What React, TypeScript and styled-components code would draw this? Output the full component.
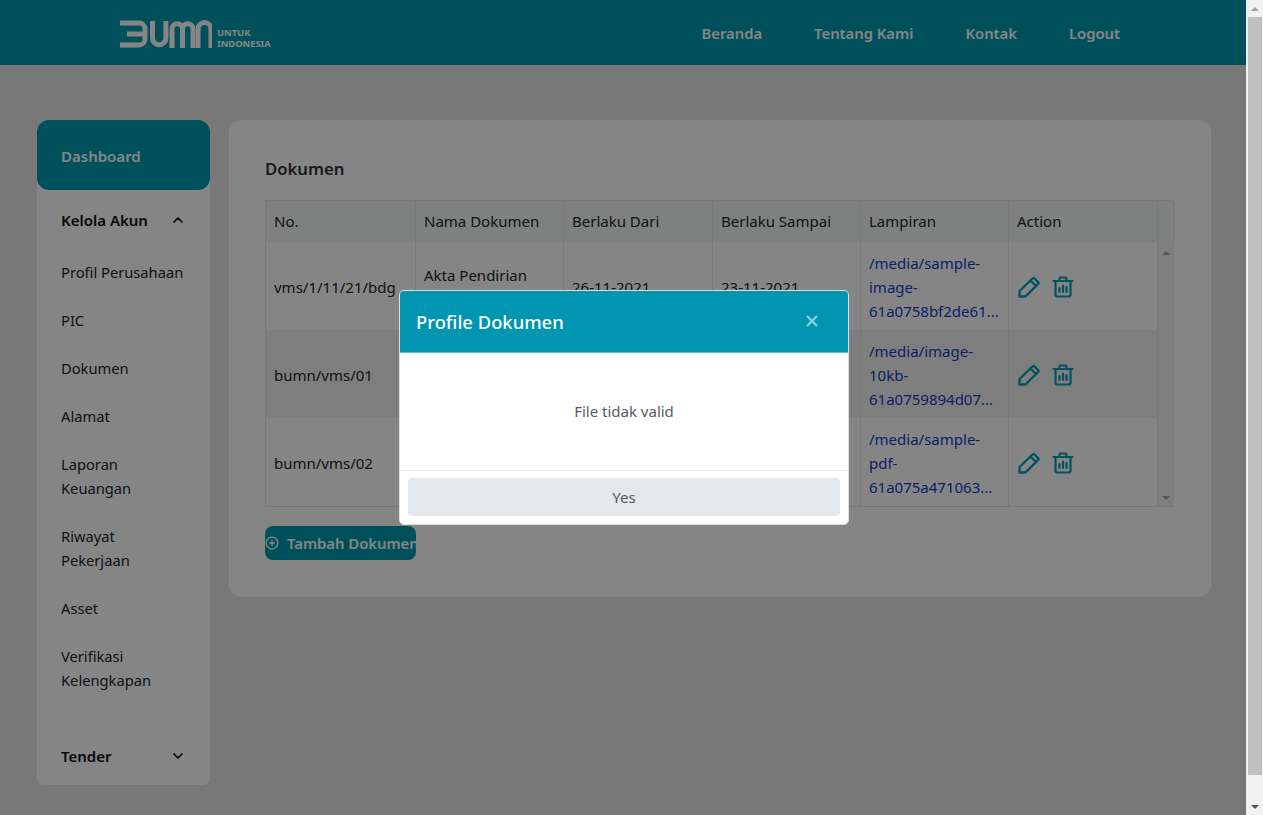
import styled, { createGlobalStyle } from "styled-components";
import { ChevronDown, ChevronUp, CirclePlus } from "lucide-react";

const GlobalStyle = createGlobalStyle`
  html, body {
    margin: 0;
    padding: 0;
    overflow: hidden;
  }
  * {
    box-sizing: border-box;
  }
  body {
    font-family: "Noto Sans", "Open Sans", sans-serif;
    font-size: 15px;
    line-height: 24px;
    color: #212529;
  }
`;

const Shell = styled.div`
  display: flex;
  width: 1263px;
  height: 815px;
  overflow: hidden;
`;

const Page = styled.div`
  position: relative;
  width: 1246px;
  height: 815px;
  background-color: #e6e6e6;
  overflow: hidden;
`;

const Navbar = styled.header`
  display: flex;
  align-items: center;
  height: 65px;
  padding-left: 120px;
  background-color: #009ab1;
`;

const Logo = styled.div`
  display: flex;
  align-items: flex-end;
  gap: 5px;
  height: 30px;
`;

const LogoText = styled.div`
  font-size: 9.4px;
  line-height: 11px;
  font-weight: 700;
  color: #ffffff;
  margin-bottom: -1px;
`;

const NavLinks = styled.nav`
  display: flex;
  margin-left: auto;
  margin-right: 126px;
  gap: 52px;
`;

const NavLink = styled.a`
  font-size: 14.8px;
  font-weight: 600;
  color: #ffffff;
`;

const Body = styled.div`
  display: flex;
  align-items: flex-start;
  gap: 19px;
  padding: 55px 35px 0 37px;
`;

const Sidebar = styled.aside`
  width: 173px;
  height: 665px;
  flex-shrink: 0;
  background-color: #ffffff;
  border-radius: 12px 12px 6px 6px;
`;

const DashboardItem = styled.div`
  display: flex;
  align-items: center;
  height: 70px;
  padding: 2px 0 0 24px;
  background-color: #009ab1;
  border-radius: 12px;
  font-weight: 600;
  color: #ffffff;
`;

const GroupTitle = styled.div<{ $gap?: number }>`
  display: flex;
  align-items: center;
  justify-content: space-between;
  height: 60px;
  padding: 0 24px;
  margin-top: ${props => props.$gap || 0}px;
  margin-bottom: -2px;
  font-weight: 600;
  color: #111111;
`;

const SubItem = styled.div`
  padding: 12px 24px;
  font-size: 14.7px;
  color: #212529;
`;

const Card = styled.main`
  flex: 1;
  height: 477px;
  padding: 36px;
  background-color: #ffffff;
  border-radius: 12px;
`;

const CardTitle = styled.h2`
  margin: 0 0 17px;
  height: 27px;
  font-size: 16.7px;
  line-height: 26px;
  font-weight: 600;
  color: #333333;
`;

const TableFrame = styled.div`
  width: 909px;
  border-style: solid;
  border-color: #e9e9e9;
  border-width: 1px 0 0 1px;
`;

const COLUMNS = "150px 148px 149px 148px 148px 149px";

const HeadRow = styled.div`
  display: grid;
  grid-template-columns: ${COLUMNS} 16px;
  background-color: #f2f8f6;
  border-bottom: 1px solid #eaf0ee;
`;

const HeadCell = styled.div`
  height: 40px;
  padding: 8px;
  border-right: 1px solid #e6ebe9;
`;

const BodyWrap = styled.div`
  display: flex;
  height: 265px;
  border-bottom: 1px solid #e3e3e3;
`;

const Rows = styled.div`
  width: 892px;
`;

const Row = styled.div<{ $striped?: boolean }>`
  display: grid;
  grid-template-columns: ${COLUMNS};
  height: 88px;
  background-color: ${props => (props.$striped ? "#f2f2f2" : "#ffffff")};
`;

const Cell = styled.div`
  display: flex;
  align-items: center;
  padding: 9px 8px 7px;
  border-right: 1px solid #e6e6e6;
`;

const FileLink = styled.a`
  color: #0f3ec4;
`;

const Actions = styled.div`
  display: flex;
  align-items: center;
  gap: 12px;
  margin-left: 1px;
  color: #00a0b6;
`;

const InnerScroll = styled.div`
  display: flex;
  flex-direction: column;
  align-items: center;
  justify-content: space-between;
  width: 16px;
  padding: 9px 0 6px;
  background-color: #f1f1f1;
`;

const Arrow = styled.span<{ $down?: boolean; $color: string }>`
  width: 0;
  height: 0;
  border-left: 4px solid transparent;
  border-right: 4px solid transparent;
  border-top: ${props => (props.$down ? `4px solid ${props.$color}` : "0")};
  border-bottom: ${props => (props.$down ? "0" : `4px solid ${props.$color}`)};
`;

const AddButton = styled.button`
  display: flex;
  align-items: center;
  gap: 8px;
  width: 151px;
  height: 34px;
  margin-top: 19px;
  padding: 0;
  border: 0;
  overflow: hidden;
  white-space: nowrap;
  background-color: #009ab1;
  border-radius: 8px;
  font-family: inherit;
  font-size: 14.8px;
  font-weight: 600;
  color: #ffffff;
  svg {
    flex-shrink: 0;
  }
`;

const Backdrop = styled.div`
  position: absolute;
  inset: 0;
  background-color: rgba(0, 0, 0, 0.48);
`;

const Modal = styled.div`
  position: absolute;
  left: 399px;
  top: 290px;
  width: 450px;
  height: 235px;
  background-color: #ffffff;
  border: 1px solid #dddddd;
  border-radius: 5px;
  overflow: hidden;
`;

const ModalHeader = styled.div`
  display: flex;
  align-items: center;
  justify-content: space-between;
  height: 62px;
  padding: 1px 30px 0 16px;
  background-color: #0095b0;
  border-bottom: 1px solid #5cc0d2;
`;

const ModalTitle = styled.h5`
  margin: 0;
  font-size: 18.4px;
  line-height: 30px;
  font-weight: 500;
  color: #ffffff;
`;

const CloseIcon = styled.svg`
  width: 12px;
  height: 12px;
  margin-top: -3px;
  opacity: 0.55;
`;

const ModalBody = styled.div`
  display: flex;
  align-items: center;
  justify-content: center;
  height: 116px;
  color: #555a60;
`;

const ModalFooter = styled.div`
  margin-top: 1px;
  padding: 7px 8px;
  border-top: 1px solid #eeeeee;
`;

const YesButton = styled.button`
  display: block;
  width: 100%;
  height: 38px;
  padding: 0;
  border: 0;
  background-color: #e4e7ec;
  border-radius: 4px;
  font-family: inherit;
  font-size: 15px;
  color: #555a60;
`;

const PageScroll = styled.div`
  display: flex;
  flex-direction: column;
  align-items: center;
  width: 17px;
  height: 815px;
  background-color: #f1f1f1;
`;

const ArrowSlot = styled.div`
  display: flex;
  align-items: center;
  justify-content: center;
  width: 100%;
  height: 17px;
`;

const Thumb = styled.div`
  width: 14px;
  height: 758px;
  margin-left: 1px;
  background-color: #c1c1c1;
`;

const Spacer = styled.div`
  flex: 1;
`;

const menuItems = ["Profil Perusahaan", "PIC", "Dokumen", "Alamat", "Laporan Keuangan", "Riwayat Pekerjaan", "Asset", "Verifikasi Kelengkapan"];

const documents = [
  { no: "vms/1/11/21/bdg", name: "Akta Pendirian Perusahaan", from: "26-11-2021", to: "23-11-2021", file: "/media/sample-image-61a0758bf2de61..." },
  { no: "bumn/vms/01", name: "NPWP", from: "26-11-2021", to: "30-11-2021", file: "/media/image-10kb-61a0759894d07..." },
  { no: "bumn/vms/02", name: "SIUP", from: "26-11-2021", to: "30-11-2021", file: "/media/sample-pdf-61a075a471063..." },
];

function BumnLogo() {
  return (
    <svg width="92" height="28" viewBox="0 0 92 28" fill="none" stroke="#ffffff" strokeWidth="5">
      <path d="M0 3H19a6 6 0 0 1 6 6V19a6 6 0 0 1-6 6H0M7 14H25" />
      <path d="M32.5 1V18a6.7 6.7 0 0 0 13.4 0V1" />
      <path d="M52 28V9a5.2 5.2 0 0 1 10.5 0V28M62.5 9a5.2 5.2 0 0 1 10.5 0V28" />
      <path d="M78 28V9a6.5 6.5 0 0 1 13 0V28" />
    </svg>
  );
}

function PencilIcon() {
  return (
    <svg width="22" height="22" viewBox="0 0 22 22" fill="none" stroke="currentColor" strokeWidth="2.4" strokeLinejoin="round" strokeLinecap="round">
      <path d="M1.5 20.5V15L14.5 2.5Q15.5 1.5 16.5 2.5L20 6Q21 7 20 8L7.5 20.5Z" />
      <path d="M12.5 4.5L18 10" />
    </svg>
  );
}

function TrashIcon() {
  return (
    <svg width="22" height="22" viewBox="0 0 22 22" fill="none" stroke="currentColor" strokeWidth="2.2" strokeLinejoin="round" strokeLinecap="round">
      <path d="M1.5 5H20.5" />
      <path d="M7.5 5V2.5Q7.5 1.5 8.5 1.5H13.5Q14.5 1.5 14.5 2.5V5" />
      <path d="M3.5 5V18.5Q3.5 20.5 5.5 20.5H16.5Q18.5 20.5 18.5 18.5V5" />
      <path d="M7.5 12V16M11 9.5V16M14.5 11V16" />
    </svg>
  );
}

function App() {
  return (
    <Shell>
      <GlobalStyle />
      <Page>
        <Navbar>
          <Logo>
            <BumnLogo />
            <LogoText>
              UNTUK
              <br />
              INDONESIA
            </LogoText>
          </Logo>
          <NavLinks>
            <NavLink>Beranda</NavLink>
            <NavLink>Tentang Kami</NavLink>
            <NavLink>Kontak</NavLink>
            <NavLink>Logout</NavLink>
          </NavLinks>
        </Navbar>

        <Body>
          <Sidebar>
            <DashboardItem>Dashboard</DashboardItem>
            <GroupTitle>
              Kelola Akun
              <ChevronUp size={16} strokeWidth={2.5} />
            </GroupTitle>
            {menuItems.map(item => (
              <SubItem key={item}>{item}</SubItem>
            ))}
            <GroupTitle $gap={22}>
              Tender
              <ChevronDown size={16} strokeWidth={2.5} />
            </GroupTitle>
          </Sidebar>

          <Card>
            <CardTitle>Dokumen</CardTitle>
            <TableFrame>
              <HeadRow>
                <HeadCell>No.</HeadCell>
                <HeadCell>Nama Dokumen</HeadCell>
                <HeadCell>Berlaku Dari</HeadCell>
                <HeadCell>Berlaku Sampai</HeadCell>
                <HeadCell>Lampiran</HeadCell>
                <HeadCell>Action</HeadCell>
                <HeadCell />
              </HeadRow>
              <BodyWrap>
                <Rows>
                  {documents.map((doc, index) => (
                    <Row key={doc.no} $striped={index === 1}>
                      <Cell>{doc.no}</Cell>
                      <Cell>{doc.name}</Cell>
                      <Cell>{doc.from}</Cell>
                      <Cell>{doc.to}</Cell>
                      <Cell>
                        <FileLink>{doc.file}</FileLink>
                      </Cell>
                      <Cell>
                        <Actions>
                          <PencilIcon />
                          <TrashIcon />
                        </Actions>
                      </Cell>
                    </Row>
                  ))}
                </Rows>
                <InnerScroll>
                  <Arrow $color="#a3a3a3" />
                  <Arrow $down $color="#a3a3a3" />
                </InnerScroll>
              </BodyWrap>
            </TableFrame>
            <AddButton>
              <CirclePlus size={14} strokeWidth={2.4} />
              Tambah Dokumen
            </AddButton>
          </Card>
        </Body>

        <Backdrop />
        <Modal>
          <ModalHeader>
            <ModalTitle>Profile Dokumen</ModalTitle>
            <CloseIcon viewBox="0 0 12 12" fill="none" stroke="#ffffff" strokeWidth="2.4">
              <path d="M1 1L11 11M11 1L1 11" />
            </CloseIcon>
          </ModalHeader>
          <ModalBody>File tidak valid</ModalBody>
          <ModalFooter>
            <YesButton>Yes</YesButton>
          </ModalFooter>
        </Modal>
      </Page>

      <PageScroll>
        <ArrowSlot>
          <Arrow $color="#a3a3a3" />
        </ArrowSlot>
        <Thumb />
        <Spacer />
        <ArrowSlot>
          <Arrow $down $color="#505050" />
        </ArrowSlot>
      </PageScroll>
    </Shell>
  );
}

export default App;
